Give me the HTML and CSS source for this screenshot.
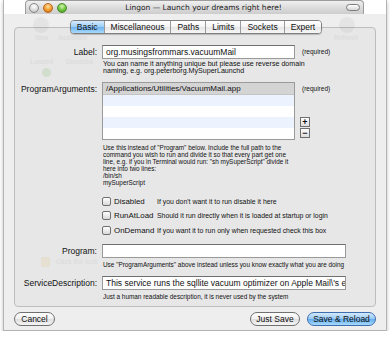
FILE: index.html
```html
<!DOCTYPE html>
<html lang="en">
<head>
    <meta charset="UTF-8">
    <title>Lingon</title>
    <link rel="stylesheet" href="styles.css">
</head>
<body>
    <div class="window">
        <!-- title bar -->
        <div class="titlebar">
            <span class="light light-gray"></span>
            <span class="light light-orange"></span>
            <span class="light light-green"></span>
            <div class="title">Lingon &mdash; Launch your dreams right here!</div>
            <span class="pill"></span>
        </div>

        <!-- faded main window behind the sheet -->
        <div class="ghost">
            <span class="g-icon" style="left:29px;top:17px"></span>
            <span class="g-icon" style="left:335px;top:17px"></span>
            <span class="g-text" style="left:31px;top:34px">New</span>
            <span class="g-text" style="left:54px;top:34px">Assistant</span>
            <span class="g-text" style="left:330px;top:34px">Refresh</span>
            <span class="g-text" style="left:26px;top:58px">Loaded</span>
            <span class="g-text" style="left:62px;top:58px">Disabled</span>
            <span class="g-dot" style="left:38px;top:68px"></span>
            <span class="g-lock" style="left:37px;top:257px"></span>
            <span class="g-text" style="left:52px;top:258px">Click the lock</span>
        </div>

        <div class="sheet">
            <div class="tabs">
                <span class="tab tab-on">Basic</span>
                <span class="tab">Miscellaneous</span>
                <span class="tab">Paths</span>
                <span class="tab">Limits</span>
                <span class="tab">Sockets</span>
                <span class="tab">Expert</span>
            </div>

            <div class="tabbox">
                <!-- Label -->
                <div class="row">
                    <div class="lbl">Label:</div>
                    <div class="fld">
                        <div class="line">
                            <div class="input input-short">org.musingsfrommars.vacuumMail</div>
                            <span class="req">(required)</span>
                        </div>
                        <p class="help help-label">You can name it anything unique but please use reverse domain<br>naming, e.g. org.peterborg.MySuperLaunchd</p>
                    </div>
                </div>

                <!-- ProgramArguments -->
                <div class="row row-args">
                    <div class="lbl">ProgramArguments:</div>
                    <div class="fld">
                        <div class="line">
                            <div class="table">
                                <div class="trow trow-sel">/Applications/Utilities/VacuumMail.app</div>
                                <div class="trow trow-alt"></div>
                                <div class="trow"></div>
                                <div class="trow trow-alt"></div>
                                <div class="trow"></div>
                            </div>
                            <div class="side">
                                <span class="req">(required)</span>
                                <span class="pm pm-plus">+</span>
                                <span class="pm">&minus;</span>
                            </div>
                        </div>
                        <p class="help help-args">Use this instead of "Program" below. Include the full path to the<br>command you wish to run and divide it so that every part get one<br>line, e.g. if you in Terminal would run: "sh mySuperScript" divide it<br>here into two lines:<br>/bin/sh<br>mySuperScript</p>
                    </div>
                </div>

                <!-- checkboxes -->
                <div class="checks">
                    <span class="box"></span><span class="clabel">Disabled</span><span class="cdesc">If you don't want it to run disable it here</span>
                    <span class="box"></span><span class="clabel">RunAtLoad</span><span class="cdesc">Should it run directly when it is loaded at startup or login</span>
                    <span class="box"></span><span class="clabel">OnDemand</span><span class="cdesc">If you want it to run only when requested check this box</span>
                </div>

                <!-- Program -->
                <div class="row row-program">
                    <div class="lbl">Program:</div>
                    <div class="fld">
                        <div class="input input-long"></div>
                        <p class="help help-low">Use "ProgramArguments" above instead unless you know exactly what you are doing</p>
                    </div>
                </div>

                <!-- ServiceDescription -->
                <div class="row row-desc">
                    <div class="lbl">ServiceDescription:</div>
                    <div class="fld">
                        <div class="input input-long">This service runs the sqllite vacuum optimizer on Apple Mail\'s e</div>
                        <p class="help help-low">Just a human readable description, it is never used by the system</p>
                    </div>
                </div>
            </div>

            <div class="buttons">
                <span class="btn btn-cancel">Cancel</span>
                <span class="btn btn-just">Just Save</span>
                <span class="btn btn-blue">Save &amp; Reload</span>
            </div>
        </div>
    </div>
</body>
</html>
```

FILE: styles.css
```css
* {
    box-sizing: border-box;
}
body {
    margin: 0;
    background: #fff;
    font-family: "Liberation Sans", Arial, sans-serif;
    color: #111;
}
.window {
    position: relative;
    display: flex;
    flex-direction: column;
    width: 384px;
    height: 331px;
    margin-left: 3px;
    border: 1px solid #b3b3b3;
    border-top: none;
    box-shadow: 0 2px 4px rgba(0,0,0,0.25);
}

/* title bar */
.titlebar {
    display: flex;
    align-items: center;
    height: 14px;
    margin: 0 22px 0 21px;
    padding: 0 3px 0 3px;
    border: 1px solid #9c9c9c;
    border-bottom: none;
    border-radius: 4px 4px 0 0;
    background: linear-gradient(#f0f0f0, #d9d9d9 60%, #cdcdcd);
}
.light {
    width: 10px;
    height: 10px;
    margin-right: 4px;
    border-radius: 50%;
    border: 1px solid #8a8a8a;
}
.light-gray {
    background: radial-gradient(circle at 50% 30%, #fff, #d8d8d8 60%, #aaa);
}
.light-orange {
    border-color: #b8651a;
    background: radial-gradient(circle at 50% 30%, #ffe0a0, #f39a2a 55%, #c9600e);
}
.light-green {
    border-color: #4a8a2a;
    background: radial-gradient(circle at 50% 30%, #d5f5b0, #6cc43d 55%, #3d8f1d);
}
.title {
    flex: 1;
    text-align: center;
    font-family: "DejaVu Sans", sans-serif;
    font-size: 7.5px;
    color: #222;
    padding-right: 10px;
}
.pill {
    width: 14px;
    height: 7px;
    border: 1px solid #7c7c7c;
    border-radius: 4px;
    background: linear-gradient(#fff, #d6d6d6);
}

/* faded window behind */
.ghost {
    position: absolute;
    inset: 0;
    z-index: 3;
    pointer-events: none;
}
.g-text {
    position: absolute;
    font-size: 6.5px;
    line-height: 7px;
    color: #dddddd;
    font-weight: bold;
}
.g-icon {
    position: absolute;
    width: 16px;
    height: 16px;
    border-radius: 50%;
    background: rgba(0,0,0,0.04);
}
.g-dot {
    position: absolute;
    width: 9px;
    height: 9px;
    border-radius: 50%;
    background: rgba(90,170,60,0.15);
}
.g-lock {
    position: absolute;
    width: 9px;
    height: 10px;
    border-radius: 2px;
    background: rgba(220,170,60,0.12);
}

/* sheet */
.sheet {
    position: relative;
    flex: 1;
    display: flex;
    flex-direction: column;
    padding: 6px 10px 0 10px;
    background: #eeeeee;
}
.tabs {
    position: relative;
    z-index: 2;
    align-self: center;
    display: flex;
    height: 14px;
    margin-bottom: -7px;
    margin-left: 2px;
    border: 1px solid #7f7f7f;
    border-radius: 4px;
    overflow: hidden;
    box-shadow: 0 1px 1px rgba(0,0,0,0.2);
}
.tab {
    padding: 0 6px;
    font-size: 8.5px;
    line-height: 12px;
    border-left: 1px solid #9a9a9a;
    background: linear-gradient(#ffffff, #f4f4f4 50%, #e6e6e6 51%, #f6f6f6);
}
.tab:first-child {
    border-left: none;
}
.tab-on {
    background: linear-gradient(#d5ebfd, #9ccdf6 50%, #6eb2ee 51%, #a8dafd);
}

.tabbox {
    position: relative;
    height: 280px;
    padding-top: 17px;
    border: 1px solid #bdbdbd;
    border-radius: 4px;
    background: #e7e7e7;
}

/* form rows */
.row {
    display: flex;
}
.lbl {
    flex: none;
    width: 87px;
    padding-right: 5px;
    text-align: right;
    font-size: 8.5px;
    line-height: 14px;
}
.fld {
    flex: 1;
}
.line {
    display: flex;
}
.input {
    height: 14px;
    padding: 0 3px;
    border: 1px solid #999;
    border-top-color: #6f6f6f;
    background: #fff;
    font-size: 8.5px;
    line-height: 12px;
    white-space: nowrap;
    overflow: hidden;
}
.input-short {
    width: 193px;
}
.input-long {
    width: 244px;
}
.req {
    margin-left: 7px;
    font-size: 6.5px;
    line-height: 14px;
}
.help {
    margin: 2px 0 0 1px;
    font-size: 6.4px;
    line-height: 7px;
}
.help-label {
    font-size: 7.1px;
}

.row-args {
    margin-top: 7px;
}
.table {
    width: 193px;
    border: 1px solid #9a9a9a;
    background: #fff;
}
.trow {
    height: 11px;
    font-size: 8px;
    line-height: 11px;
    padding-left: 3px;
}
.trow-sel {
    height: 12px;
    background: #d4d4d4;
    border-bottom: 1px solid #c4c4c4;
}
.trow-alt {
    background: #edf3fe;
}
.side {
    display: flex;
    flex-direction: column;
    align-items: flex-start;
    margin-left: 5px;
}
.side .req {
    margin-left: 2px;
}
.pm {
    width: 10px;
    height: 10px;
    margin-top: 1px;
    border: 1px solid #6f6f6f;
    background: linear-gradient(#fff, #dcdcdc);
    font-size: 9px;
    font-weight: bold;
    line-height: 8px;
    text-align: center;
}
.pm-plus {
    margin-top: 21px;
}
.help-args {
    margin-top: 4px;
}

/* checkboxes */
.checks {
    display: grid;
    grid-template-columns: 10px 41px 1fr;
    grid-auto-rows: 14.5px;
    align-items: center;
    column-gap: 2px;
    margin: 8px 0 0 87px;
}
.box {
    width: 9px;
    height: 9px;
    border: 1px solid #6f6f6f;
    border-radius: 2px;
    background: linear-gradient(#fff, #d8d8d8);
}
.clabel {
    font-size: 7.9px;
    white-space: nowrap;
}
.cdesc {
    font-size: 6.9px;
    white-space: nowrap;
}

.row-program {
    margin-top: 6px;
}
.row-desc {
    margin-top: 8px;
}
.help-low {
    margin-top: 3px;
}

/* bottom buttons */
.buttons {
    display: flex;
    gap: 7px;
    margin-top: 5px;
}
.btn {
    height: 14px;
    border: 1px solid #707070;
    border-radius: 7px;
    background: linear-gradient(#ffffff, #efefef 50%, #dedede 51%, #f5f5f5);
    font-size: 8.5px;
    line-height: 12px;
    text-align: center;
}
.btn-cancel {
    width: 41px;
    margin-right: auto;
}
.btn-just {
    width: 50px;
}
.btn-blue {
    width: 69px;
    border-color: #3e6db0;
    background: linear-gradient(#d3eafd, #95c9f5 50%, #62aaee 51%, #a6dbfd);
}
```
